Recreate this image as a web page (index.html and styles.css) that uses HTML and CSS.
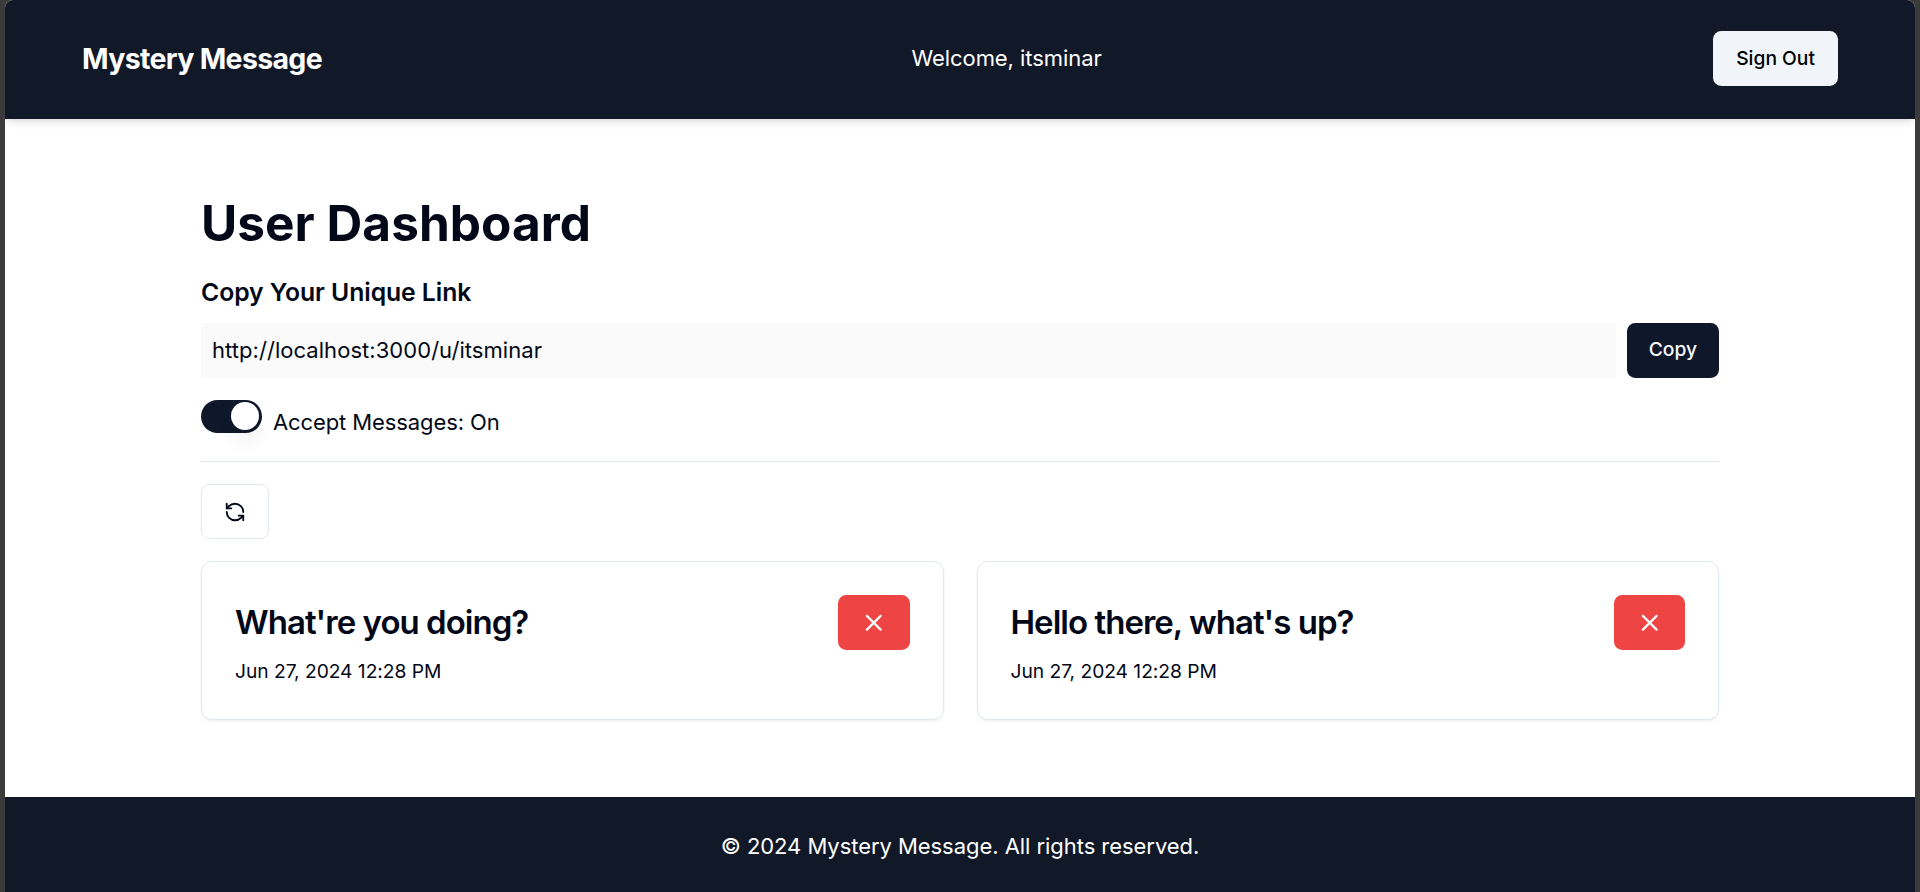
FILE: index.html
```html
<!DOCTYPE html>
<html lang="en">
<head>
<meta charset="utf-8">
<title>Mystery Message</title>
<link rel="stylesheet" href="styles.css">
</head>
<body>
<div class="page">
  <header class="navbar">
    <a class="brand">Mystery Message</a>
    <span class="welcome">Welcome, itsminar</span>
    <button class="btn btn-light">Sign Out</button>
  </header>
  <main class="dashboard">
    <h1 class="title">User Dashboard</h1>
    <h2 class="subtitle">Copy Your Unique Link</h2>
    <div class="link-row">
      <input class="link-input" type="text" value="http://localhost:3000/u/itsminar" disabled>
      <button class="btn btn-dark">Copy</button>
    </div>
    <div class="switch-row">
      <button class="switch" role="switch" aria-checked="true"><span class="thumb"></span></button>
      <span class="switch-label">Accept Messages: On</span>
    </div>
    <div class="separator"></div>
    <button class="btn btn-outline" aria-label="Refresh">
      <svg class="icon-refresh" viewBox="0 0 24 24"><path d="M21 12a9 9 0 0 0-9-9 9.75 9.75 0 0 0-6.74 2.74L3 8"/><path d="M3 3v5h5"/><path d="M3 12a9 9 0 0 0 9 9 9.75 9.75 0 0 0 6.74-2.74L21 16"/><path d="M16 16h5v5"/></svg>
    </button>
    <div class="cards">
      <article class="card">
        <div class="card-head">
          <h3 class="card-title">What're you doing?</h3>
          <button class="btn btn-danger" aria-label="Delete"><svg class="icon-x" viewBox="0 0 24 24"><path d="M18 6 6 18"/><path d="m6 6 12 12"/></svg></button>
        </div>
        <div class="card-date">Jun 27, 2024 12:28 PM</div>
      </article>
      <article class="card">
        <div class="card-head">
          <h3 class="card-title">Hello there, what's up?</h3>
          <button class="btn btn-danger" aria-label="Delete"><svg class="icon-x" viewBox="0 0 24 24"><path d="M18 6 6 18"/><path d="m6 6 12 12"/></svg></button>
        </div>
        <div class="card-date">Jun 27, 2024 12:28 PM</div>
      </article>
    </div>
  </main>
  <footer class="footer">© 2024 Mystery Message. All rights reserved.</footer>
</div>
</body>
</html>
```
FILE: styles.css
```css
* { box-sizing: border-box; margin: 0; }
body {
  background: #3b3b3b;
  color: #020817;
  font: 400 22px/33px Inter, sans-serif;
}
.page {
  height: 892px;
  margin: 0 5px;
  background: #fff;
  border-radius: 8px 8px 0 0;
  overflow: hidden;
  display: flex;
  flex-direction: column;
}
.navbar {
  height: 119px;
  padding: 31px 77px 33px;
  background: #111827;
  color: #fff;
  box-shadow: 0 5.5px 8.25px -1.4px rgba(0,0,0,.1), 0 2.75px 5.5px -2.75px rgba(0,0,0,.1);
  display: flex;
  align-items: center;
  justify-content: space-between;
}
.brand { font-size: 28.5px; font-weight: 700; letter-spacing: -.67px; }
.welcome { margin-right: 22px; letter-spacing: -.06px; }
.btn {
  height: 55px;
  padding: 0 22px;
  border: 0;
  border-radius: 8.25px;
  font: 500 19.25px/27.5px Inter, sans-serif;
  display: inline-flex;
  align-items: center;
  justify-content: center;
}
.btn svg { fill: none; stroke: currentColor; stroke-width: 2; stroke-linecap: round; stroke-linejoin: round; }
.btn-light { padding: 0 23px; background: #f1f5f9; color: #000; }
.btn-dark { background: #0f172a; color: #f8fafc; }
.btn-outline { background: #fff; color: #020817; border: 1px solid #e2e8f0; padding-top: 1px; }
.btn-danger { background: #ef4444; color: #f8fafc; padding-top: 1px; }
.icon-refresh { width: 22px; height: 22px; }
.icon-x { width: 27.5px; height: 27.5px; }
.dashboard {
  width: 1518px;
  margin: 0 auto;
  padding-top: 77px;
  flex: 1;
}
.title { font-size: 49.5px; line-height: 55px; font-weight: 700; letter-spacing: .05px; margin-bottom: 22px; }
.subtitle { font-size: 24.75px; line-height: 38.5px; font-weight: 600; letter-spacing: -.06px; margin-bottom: 11px; }
.link-row { display: flex; gap: 11px; margin-bottom: 22px; }
.link-input {
  flex: 1;
  height: 55px;
  padding: 0 11px;
  border: 0;
  background: #fafafa;
  color: #020817;
  font: inherit;
  letter-spacing: .05px;
}
.switch-row { display: flex; gap: 11px; height: 61px; }
.switch {
  width: 61px;
  height: 33px;
  padding: 0 2.75px;
  border: 0;
  border-radius: 17px;
  background: #0f172a;
  display: flex;
  align-items: center;
  justify-content: flex-end;
}
.thumb {
  width: 28px;
  height: 28px;
  border-radius: 50%;
  background: #fff;
  box-shadow: 0 14px 20px -4px rgba(0,0,0,.1), 0 5.5px 8px -5.5px rgba(0,0,0,.1);
}
.switch-label { padding-top: 6px; letter-spacing: -.1px; }
.separator { height: 1px; background: #e2e8f0; margin-bottom: 22px; }
.cards { display: grid; grid-template-columns: 1fr 1fr; gap: 33px; margin-top: 22px; }
.card {
  height: 159px;
  padding: 33px;
  border: 1px solid #e2e8f0;
  border-radius: 11px;
  box-shadow: 0 1.4px 2.75px rgba(0,0,0,.05);
}
.card-head { display: flex; align-items: center; justify-content: space-between; margin-bottom: 8px; }
.card-title { font-size: 33px; font-weight: 600; letter-spacing: -.98px; }
.card-date { font-size: 19.25px; line-height: 27.5px; letter-spacing: -.05px; }
.footer {
  height: 95px;
  padding-top: 33px;
  background: #111827;
  color: #fff;
  text-align: center;
  letter-spacing: -.05px;
}
```
